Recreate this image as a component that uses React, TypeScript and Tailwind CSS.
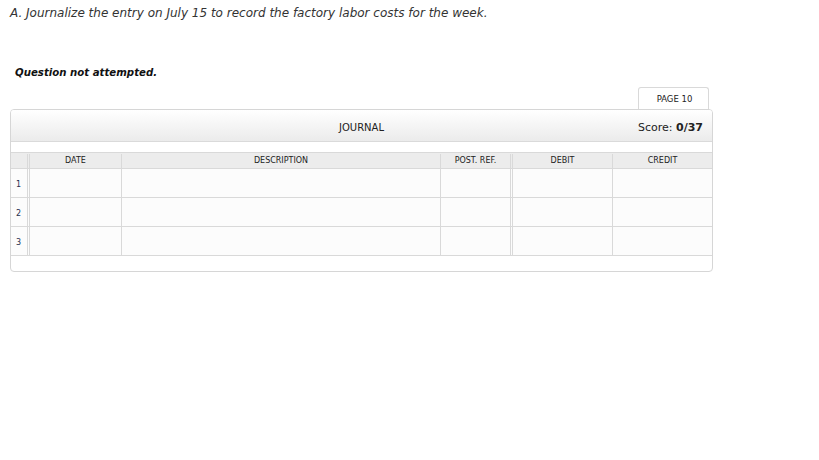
import React from "react";

const cols = [
  { label: "DATE", cls: "w-[92px] border-r border-[#d9d9d9]" },
  { label: "DESCRIPTION", cls: "w-[319px] border-r border-[#d9d9d9]" },
  { label: "POST. REF.", cls: "w-[72px] border-r-[3px] border-double border-[#d9d9d9]" },
  { label: "DEBIT", cls: "w-[100px] border-r border-[#d9d9d9]" },
  { label: "CREDIT", cls: "flex-1" },
];

const JournalRow: React.FC<{ n: number }> = ({ n }) => (
  <div className="flex h-[29px] border-b border-[#d9d9d9] bg-[#fcfcfc]">
    <div className="flex w-[19px] items-center border-r-[3px] border-double border-[#d9d9d9] pl-[5px] pt-[3px] text-[8px] text-[#1f2f4f]">
      {n}
    </div>
    {cols.map((c) => (
      <div key={c.label} className={c.cls} />
    ))}
  </div>
);

export default function App() {
  return (
    <div className="min-h-[460px] w-[819px] bg-white font-['DejaVu_Sans',sans-serif] text-[#222]">
      <p className="pl-[10px] pt-[5px] text-[12px] italic leading-[17px] text-[#333]">
        A. Journalize the entry on July 15 to record the factory labor costs for the week.
      </p>
      <p className="mt-[43px] pl-[15px] text-[10.2px] font-bold italic leading-[16px] text-[#111]">
        Question not attempted.
      </p>

      <div className="ml-[10px] mt-[6px] w-[703px]">
        <div className="flex justify-end pr-[4px]">
          <div className="flex h-[22px] w-[71px] items-center justify-center rounded-t-[3px] border border-b-0 border-[#d9d9d9] bg-white pt-[2px] pl-[2px] text-[8.5px] text-[#222]">
            PAGE 10
          </div>
        </div>

        <div className="overflow-hidden rounded-[4px] border border-[#d6d6d6] bg-white">
          <div className="relative flex h-[32px] items-center justify-center border-b border-[#dadada] bg-gradient-to-b from-white to-[#ebebeb] pt-[3px]">
            <span className="text-[10px] text-[#222]">JOURNAL</span>
            <span className="absolute right-[9px] top-[10px] text-[11px] text-[#222]">
              Score: <span className="font-bold">0/37</span>
            </span>
          </div>
          <div className="h-[10px]" />

          <div className="flex h-[17px] border-y border-[#d9d9d9] bg-[#ececec] pt-[1px] text-[8px] leading-none text-[#222]">
            <div className="w-[19px] border-r-[3px] border-double border-[#d9d9d9]" />
            {cols.map((c) => (
              <div key={c.label} className={`${c.cls} flex items-center justify-center`}>
                {c.label}
              </div>
            ))}
          </div>
          {[1, 2, 3].map((n) => (
            <JournalRow key={n} n={n} />
          ))}
          <div className="h-[15px]" />
        </div>
      </div>
    </div>
  );
}
